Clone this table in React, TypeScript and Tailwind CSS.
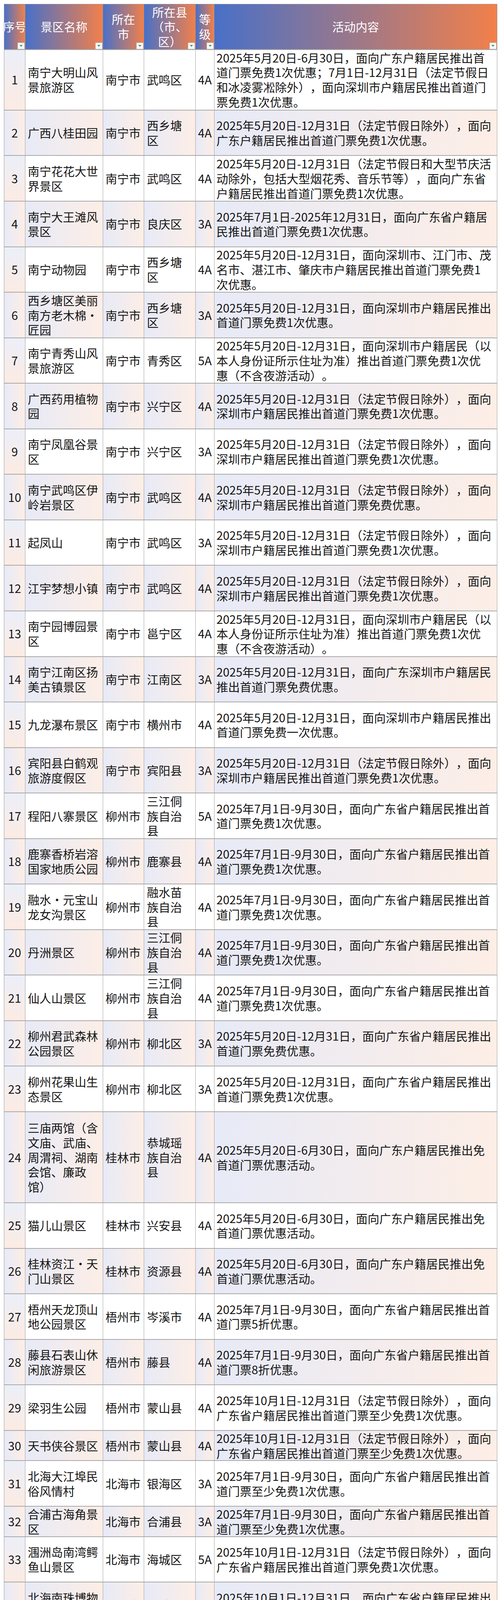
import React from 'react';

// 广东游客广西景区优惠活动一览（Excel 表格截图样式）

type Spot = {
  name: string;
  city: string;
  county: string;
  grade: string;
  text: string;
  lines?: 2 | 3 | 4 | 6;
};

const A = '2025年5月20日-12月31日（法定节假日除外），面向深圳市户籍居民推出首道门票免费1次优惠。';
const B = '2025年5月20日-12月31日，面向深圳市户籍居民（以本人身份证所示住址为准）推出首道门票免费1次优惠（不含夜游活动）。';
const C = '2025年7月1日-9月30日，面向广东省户籍居民推出首道门票免费1次优惠。';
const D = '2025年5月20日-6月30日，面向广东户籍居民推出免首道门票优惠活动。';
const E = '2025年10月1日-12月31日（法定节假日除外），面向广东省户籍居民推出首道门票至少免费1次优惠。';
const F = '2025年7月1日-9月30日，面向广东省户籍居民推出首道门票至少免费1次优惠。';
const G = '2025年10月1日-12月31日，面向广东省户籍居民推出首道门票至少免费1次优惠。';
const H = '2025年10月1日-12月31日（法定节假日除外），面向广东省深圳、江门、湛江、茂名、肇庆市户籍居民推出首道门票至少免费1次优惠。';

const spots: Spot[] = [
  { name: '南宁大明山风景旅游区', city: '南宁市', county: '武鸣区', grade: '4A', lines: 4, text: '2025年5月20日-6月30日，面向广东户籍居民推出首道门票免费1次优惠；7月1日-12月31日（法定节假日和冰凌雾凇除外），面向深圳市户籍居民推出首道门票免费1次优惠。' },
  { name: '广西八桂田园', city: '南宁市', county: '西乡塘区', grade: '4A', text: '2025年5月20日-12月31日（法定节假日除外），面向广东户籍居民推出首道门票免费1次优惠。' },
  { name: '南宁花花大世界景区', city: '南宁市', county: '武鸣区', grade: '4A', text: '2025年5月20日-12月31日（法定节假日和大型节庆活动除外，包括大型烟花秀、音乐节等），面向广东省户籍居民推出首道门票免费1次优惠。' },
  { name: '南宁大王滩风景区', city: '南宁市', county: '良庆区', grade: '3A', text: '2025年7月1日-2025年12月31日，面向广东省户籍居民推出首道门票免费1次优惠。' },
  { name: '南宁动物园', city: '南宁市', county: '西乡塘区', grade: '4A', text: '2025年5月20日-12月31日，面向深圳市、江门市、茂名市、湛江市、肇庆市户籍居民推出首道门票免费1次优惠。' },
  { name: '西乡塘区美丽南方老木棉•匠园', city: '南宁市', county: '西乡塘区', grade: '3A', text: '2025年5月20日-12月31日，面向深圳市户籍居民推出首道门票免费1次优惠。' },
  { name: '南宁青秀山风景旅游区', city: '南宁市', county: '青秀区', grade: '5A', text: B },
  { name: '广西药用植物园', city: '南宁市', county: '兴宁区', grade: '4A', text: A },
  { name: '南宁凤凰谷景区', city: '南宁市', county: '兴宁区', grade: '3A', text: A },
  { name: '南宁武鸣区伊岭岩景区', city: '南宁市', county: '武鸣区', grade: '4A', text: '2025年5月20日-12月31日（法定节假日除外），面向深圳市户籍居民推出首道门票免费优惠。' },
  { name: '起凤山', city: '南宁市', county: '武鸣区', grade: '3A', text: A },
  { name: '江宇梦想小镇', city: '南宁市', county: '武鸣区', grade: '4A', text: A },
  { name: '南宁园博园景区', city: '南宁市', county: '邕宁区', grade: '4A', text: B },
  { name: '南宁江南区扬美古镇景区', city: '南宁市', county: '江南区', grade: '3A', text: '2025年5月20日-12月31日，面向广东深圳市户籍居民推出首道门票免费优惠。' },
  { name: '九龙瀑布景区', city: '南宁市', county: '横州市', grade: '4A', text: '2025年5月20日-12月31日，面向深圳市户籍居民推出首道门票免费一次优惠。' },
  { name: '宾阳县白鹤观旅游度假区', city: '南宁市', county: '宾阳县', grade: '3A', text: A },
  { name: '程阳八寨景区', city: '柳州市', county: '三江侗族自治县', grade: '5A', text: C },
  { name: '鹿寨香桥岩溶国家地质公园', city: '柳州市', county: '鹿寨县', grade: '4A', text: C },
  { name: '融水·元宝山龙女沟景区', city: '柳州市', county: '融水苗族自治县', grade: '4A', text: C },
  { name: '丹洲景区', city: '柳州市', county: '三江侗族自治县', grade: '4A', text: C },
  { name: '仙人山景区', city: '柳州市', county: '三江侗族自治县', grade: '4A', text: C },
  { name: '柳州君武森林公园景区', city: '柳州市', county: '柳北区', grade: '3A', text: '2025年5月20日-12月31日，面向广东省户籍居民推出首道门票免费优惠。' },
  { name: '柳州花果山生态景区', city: '柳州市', county: '柳北区', grade: '3A', text: '2025年5月20日-12月31日，面向广东省户籍居民推出首道门票免费1次优惠。' },
  { name: '三庙两馆（含文庙、武庙、周渭祠、湖南会馆、廉政馆）', city: '桂林市', county: '恭城瑶族自治县', grade: '4A', lines: 6, text: D },
  { name: '猫儿山景区', city: '桂林市', county: '兴安县', grade: '4A', text: D },
  { name: '桂林资江·天门山景区', city: '桂林市', county: '资源县', grade: '4A', text: D },
  { name: '梧州天龙顶山地公园景区', city: '梧州市', county: '岑溪市', grade: '4A', text: '2025年7月1日-9月30日，面向广东省户籍居民推出首道门票5折优惠。' },
  { name: '藤县石表山休闲旅游景区', city: '梧州市', county: '藤县', grade: '4A', text: '2025年7月1日-9月30日，面向广东省户籍居民推出首道门票8折优惠。' },
  { name: '梁羽生公园', city: '梧州市', county: '蒙山县', grade: '4A', text: E },
  { name: '天书侠谷景区', city: '梧州市', county: '蒙山县', grade: '4A', lines: 2, text: E },
  { name: '北海大江埠民俗风情村', city: '北海市', county: '银海区', grade: '3A', text: F },
  { name: '合浦古海角景区', city: '北海市', county: '合浦县', grade: '3A', lines: 2, text: F },
  { name: '涠洲岛南湾鳄鱼山景区', city: '北海市', county: '海城区', grade: '5A', text: '2025年10月1日-12月31日（法定节假日除外），面向广东省户籍居民推出首道门票免费1次优惠。' },
  { name: '北海南珠博物馆', city: '北海市', county: '海城区', grade: '3A', text: G },
  { name: '北海贝雕博物馆', city: '北海市', county: '海城区', grade: '3A', text: G },
  { name: '金海湾红树林生态旅游区', city: '北海市', county: '银海区', grade: '4A', text: E },
  { name: '北海园博园', city: '北海市', county: '银海区', grade: '4A', text: '2025年10月1日-12月31日（法定节假日除外），面向广东省户籍居民推出首道门票免费1次优惠。' },
  { name: '十万大山布透温泉', city: '防城港市', county: '上思县', grade: '4A', lines: 4, text: H },
  { name: '东兴陈公馆景区', city: '防城港市', county: '东兴市', grade: '3A', lines: 4, text: H },
  { name: '越州天湖', city: '钦州市', county: '浦北县', grade: '3A', text: '2025年5月20日-12月31日（法定节假日除外），面向广东省户籍居民推出首道门票5折优惠。' },
  { name: '北部湾花卉公园', city: '钦州市', county: '钦南区', grade: '4A', text: '2025年5月20日-12月31日，面向广东省户籍居民推出首道门票9折优惠。' },
  { name: '六峰山风景名胜区', city: '钦州市', county: '灵山县', grade: '4A', text: G },
  { name: '浦北县五皇山景区', city: '钦州市', county: '浦北县', grade: '4A', text: G },
  { name: '钦州八寨沟旅游景区', city: '钦州市', county: '钦北区', grade: '4A', text: G },
  { name: '平天山国家森林公园', city: '贵港市', county: '港北区', grade: '4A', lines: 2, text: F },
  { name: '西山风景名胜区', city: '贵港市', county: '桂平市', grade: '4A', lines: 2, text: F },
  { name: '龙潭国家森林公园', city: '贵港市', county: '桂平市', grade: '4A', text: F },
  { name: '太平天国金田起义地址景区', city: '贵港市', county: '桂平市', grade: '4A', text: F },
  { name: '北回归线标志公园', city: '贵港市', county: '桂平市', grade: '3A', text: F },
  { name: '北流勾漏洞风景区', city: '玉林市', county: '北流市', grade: '4A', text: G },
];

const rowHeight: Record<number, string> = {
  2: 'h-[77.7px]',
  3: 'h-[116.55px]',
  4: 'h-[155.4px]',
  6: 'h-[233.1px]',
};

const cols = 'grid grid-cols-[54px_199px_105px_132px_48px_724px]';
const cell = 'flex items-center overflow-hidden border-r border-[#a2a2a2]';
const tint = 'bg-linear-to-r/srgb from-[#e7eaf7] to-[#fdeee6]';

const FilterButton = () => (
  <span className="absolute right-px bottom-0 flex h-[17px] w-[18px] items-center justify-center border border-[#c6c6c6] bg-[#f7f7f7]">
    <svg width="8" height="5" viewBox="0 0 8 5">
      <path d="M0 0h8L4 5z" fill="#3e9a7d" />
    </svg>
  </span>
);

const headers: { lines: string[]; nowrap?: boolean }[] = [
  { lines: ['序号'], nowrap: true },
  { lines: ['景区名称'] },
  { lines: ['所在', '市'] },
  { lines: ['所在县', '（市、', '区）'] },
  { lines: ['等', '级'] },
  { lines: ['活动内容'] },
];

export default function App() {
  return (
    <div className="bg-white pt-[10px] pb-[8px] pl-[10px] font-['Noto_Sans_CJK_SC',sans-serif] text-[30px] leading-[37.8px] text-[#151515] [text-spacing-trim:space-all]">
      <div className="w-[1263px] border-t border-l border-[#9c9c9c]">
        <div className={`${cols} h-[116.55px] border-b-2 border-[#a6a6a6]`}>
          {headers.map((h, i) => (
            <div
              key={i}
              className={`relative flex items-center justify-center overflow-hidden border-r border-[#8f8f8f] bg-linear-to-r/srgb from-[#4870c8] to-[#f2804a] text-center text-white ${h.nowrap ? 'whitespace-nowrap' : ''}`}
            >
              <div>
                {h.lines.map((l) => (
                  <div key={l}>{l}</div>
                ))}
              </div>
              <FilterButton />
            </div>
          ))}
        </div>

        {spots.map((s, i) => {
          const even = i % 2 === 1;
          const bg = even ? tint : 'bg-white';
          const firstBg = even ? tint : 'bg-linear-to-b/srgb from-[#eceff9] to-[#fcebe3]';
          return (
            <div key={i} className={`${cols} ${rowHeight[s.lines ?? 3]} border-b-2 border-[#a9a9a9]`}>
              <div className={`${cell} ${firstBg} justify-center`}>{i + 1}</div>
              <div className={`${cell} ${bg} pl-[6px] pr-[4px]`}>
                <span>{s.name}</span>
              </div>
              <div className={`${cell} ${bg} pl-[6px] pr-[2px]`}>
                <span>{s.city}</span>
              </div>
              <div className={`${cell} ${bg} pl-[7px] pr-[10px]`}>
                <span>{s.county}</span>
              </div>
              <div className={`${cell} ${bg} justify-center`}>{s.grade}</div>
              <div className={`${cell} ${bg} pl-[5px] pr-[13px]`}>
                <span>{s.text}</span>
              </div>
            </div>
          );
        })}
      </div>
    </div>
  );
}
